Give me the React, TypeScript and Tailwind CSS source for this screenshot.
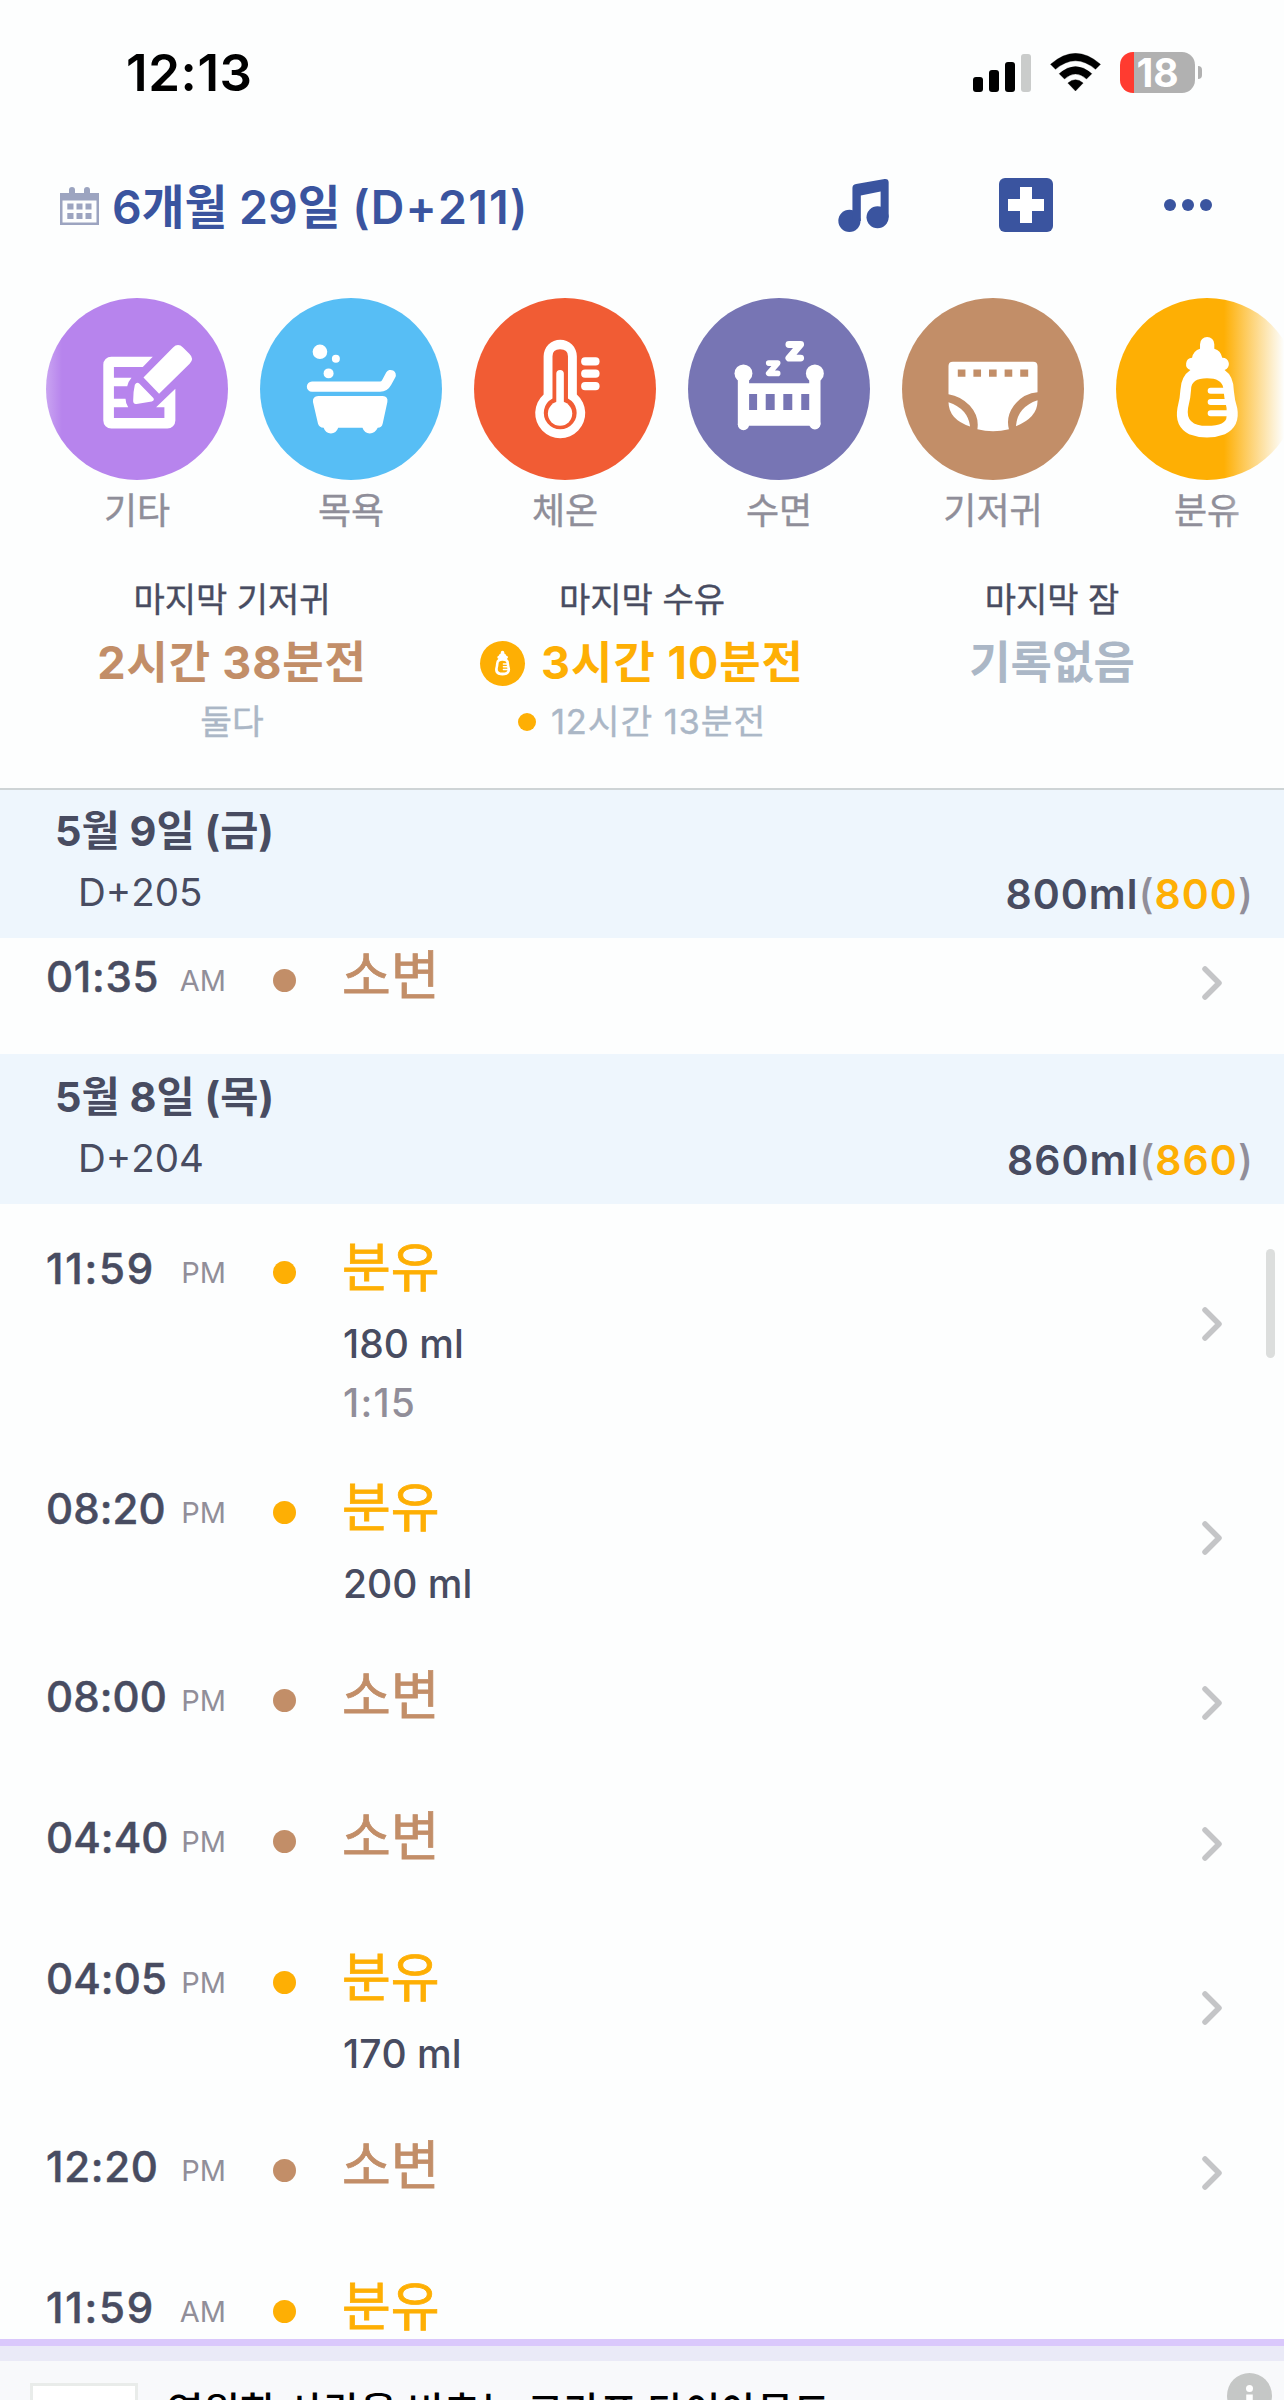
import React from "react";

const BROWN = "#c28e68";
const ORANGE = "#feaf04";

const Bottle = () => (
  <>
    <path fill="#fff" d="M960 193a21 21 0 0 1 43 0V207Q1022 212 1027 234A19 19 0 0 1 1034 271Q1062 290 1062 335Q1064 360 1072 385Q1082 440 1035 464Q981 484 927 464Q882 440 892 385Q900 355 901 330Q903 290 931 271A19 19 0 0 1 936 234Q940 213 960 207Z" />
    <path fill={ORANGE} d="M981 296Q933 296 933 330Q932 355 924 385Q915 439 981 439Q1040 439 1040 410V385Q1032 355 1030 325Q1025 296 981 296Z" />
    <path stroke="#fff" strokeWidth="18" strokeLinecap="round" d="M992 333H1040M992 367H1045M992 401H1048" />
  </>
);

const actions = [
  {
    label: "기타",
    bg: "bg-[#b784ed]",
    box: "50 54 547 548",
    icon: (
      <g fill="#fff">
        <path d="M371 231H246a24 24 0 0 0-24 24V423a24 24 0 0 0 24 24H415a24 24 0 0 0 24-24V327L381 383H406V415H254V383H297Q289 370 289 357H254V320H294Q297 305 307 294H254V262H341Z" />
        <path d="M343 293L432 203Q447 188 462 203L481 222Q497 237 482 252L390 342Z" />
        <path d="M317 315Q323 305 331 312L372 354Q378 361 368 366L322 373Q311 374 312 362Q312 335 317 315Z" />
      </g>
    ),
  },
  {
    label: "목욕",
    bg: "bg-[#57bef5]",
    box: "691 54 547 548",
    icon: (
      <g fill="#fff">
        <circle cx="871" cy="216" r="22" />
        <circle cx="919" cy="237" r="12" />
        <circle cx="897" cy="281" r="15" />
        <path fill="none" stroke="#fff" strokeWidth="31" strokeLinecap="round" d="M847 321H1052Q1065 321 1072 308L1084 286" />
        <path d="M866 349H1060Q1077 350 1074 367L1060 432Q1057 445 1045 445Q1037 462 1021 462Q1005 462 999 445H926Q920 462 904 462Q888 462 882 445Q868 444 865 432L850 367Q848 350 866 349Z" />
      </g>
    ),
  },
  {
    label: "체온",
    bg: "bg-[#f15c34]",
    box: "70 51 552 553",
    icon: (
      <g fill="#fff">
        <path d="M281 228a50.500 50 0 0 1 101 0V344A76 76 0 1 1 281 344Z" />
        <path fill="#f15c34" d="M308 228Q308 207 331 207Q355 207 355 228V356A50 50 0 1 1 308 356Z" />
        <circle cx="331" cy="402" r="37" />
        <path stroke="#fff" strokeWidth="23" strokeLinecap="round" d="M331 281V400" />
        <rect x="395" y="231" width="56" height="25" rx="12" />
        <rect x="395" y="268" width="56" height="25" rx="12" />
        <rect x="395" y="306" width="56" height="25" rx="12" />
      </g>
    ),
  },
  {
    label: "수면",
    bg: "bg-[#7775b4]",
    box: "714 54 548 548",
    icon: (
      <g fill="#fff">
        <circle cx="881" cy="281" r="27" />
        <circle cx="1096" cy="281" r="27" />
        <path d="M864 295H898V311H1079V295H1113V434a17 17 0 0 1-31 5H896a17 17 0 0 1-32-5Z" />
        <circle cx="881" cy="435" r="17" />
        <circle cx="1096" cy="433" r="17" />
        <path fill="#7775b4" d="M898 343h24v48h-24zM948 343h27v48h-27zM1001 343h27v48h-27zM1055 343h24v48h-24z" />
        <path fill="none" stroke="#fff" strokeWidth="21" strokeLinecap="round" strokeLinejoin="round" d="M1018 194H1053L1018 235H1053" />
        <path fill="none" stroke="#fff" strokeWidth="17" strokeLinecap="round" strokeLinejoin="round" d="M957 250H984L957 281H984" />
      </g>
    ),
  },
  {
    label: "기저귀",
    bg: "bg-[#c28e68]",
    box: "67 54 546 548",
    icon: (
      <g fill="#fff">
        <path d="M219 246H461q13 0 13 13V338Q430 342 403 378Q378 412 388 449Q340 461 293 449Q299 410 270 378Q243 350 206 344V259q0-13 13-13Z" />
        <path fill={BROWN} d="M234 269h23v22h-23zM281 269h23v22h-23zM328 269h23v22h-23zM375 269h23v22h-23zM422 269h24v22h-24z" />
        <path d="M206 368Q265 388 271 441Q207 420 206 368Z" />
        <path d="M474 362Q476 413 409 440Q413 383 474 362Z" />
      </g>
    ),
  },
  { label: "분유", bg: "bg-[#feaf04]", box: "708 54 546 548", icon: <Bottle /> },
];

type Entry = { time: string; half: string; kind: "pee" | "milk"; amount?: string; length?: string; tall?: boolean };

const may9: Entry[] = [{ time: "01:35", half: "AM", kind: "pee" }];
const may8: Entry[] = [
  { time: "11:59", half: "PM", kind: "milk", amount: "180 ml", length: "1:15" },
  { time: "08:20", half: "PM", kind: "milk", amount: "200 ml" },
  { time: "08:00", half: "PM", kind: "pee" },
  { time: "04:40", half: "PM", kind: "pee" },
  { time: "04:05", half: "PM", kind: "milk", amount: "170 ml" },
  { time: "12:20", half: "PM", kind: "pee" },
  { time: "11:59", half: "AM", kind: "milk", tall: true },
];

function Row({ e }: { e: Entry }) {
  const h = e.length || e.tall ? "h-[240px]" : e.amount ? "h-[188px]" : "h-[141px]";
  const milk = e.kind === "milk";
  const ones = e.time.startsWith("11") ? "tracking-[1.8px]" : e.time.includes("1") ? "tracking-[0.7px]" : "tracking-[0.1px]";
  return (
    <div className={`flex ${h} pl-[46px]`}>
      <div className="flex w-[180px] justify-between pt-[36px]">
        <span className={`text-[42px] leading-[57px] font-medium text-[#484c61] [-webkit-text-stroke:0.5px] ${ones}`}>{e.time}</span>
        <span className="pt-[4px] text-[29px] leading-[57px] text-[#918e99]">{e.half}</span>
      </div>
      <div className={`mt-[57px] ml-[47px] size-[23px] rounded-full ${milk ? "bg-[#feaf04]" : "bg-[#c28e68]"}`} />
      <div className="ml-[46px] flex-1">
        <div className={`mt-[33px] text-[53px] leading-[62px] [-webkit-text-stroke:0.8px] ${milk ? "text-[#feaf04]" : "text-[#c28e68]"}`}>
          {milk ? "분유" : "소변"}
        </div>
        {e.amount && <div className="mt-[16px] ml-[1px] text-[39px] leading-[58px] font-medium text-[#484c61]">{e.amount}</div>}
        {e.length && <div className="mt-[1px] ml-[1px] text-[39px] leading-[58px] font-medium tracking-[1.2px] text-[#918e99]">{e.length}</div>}
      </div>
      <svg className="mr-[60px] h-[36px] w-[24px] self-center" viewBox="0 0 24 36" fill="none" stroke="#c4c5c7" strokeWidth="5.500" strokeLinecap="round" strokeLinejoin="round">
        <path d="M5 4L19 18L5 32" />
      </svg>
    </div>
  );
}

function DayHeader({ date, day, total }: { date: string; day: string; total: string }) {
  return (
    <div className="relative z-10 flex h-[150px] items-start justify-between bg-[#eef6fd] pr-[30px] pl-[55px]">
      <div>
        <div className="mt-[13px] text-[41.5px] leading-[60px] font-bold whitespace-pre text-[#484c61]">{date}</div>
        <div className="pl-[23px] text-[38.5px] leading-[62px] text-[#484c61]">{day}</div>
      </div>
      <div className="mt-[76px] text-[41px] leading-[60px] font-semibold tracking-[1px] text-[#484c61]">
        {total}ml<span className="font-medium text-[#918e99]">(</span>
        <span className="text-[#feaf04]">{total}</span>
        <span className="font-medium text-[#918e99]">)</span>
      </div>
    </div>
  );
}

export default function App() {
  return (
    <div className="relative flex h-[2400px] w-[1284px] flex-col overflow-hidden bg-[#fdfefe] font-['Inter','Noto_Sans_CJK_KR',sans-serif] [font-kerning:none]">
      <div className="flex h-[144px] shrink-0 items-center pr-[82px] pl-[126px]">
        <span className="flex-1 pt-px text-[51px] leading-[60px] font-semibold tracking-[0.6px] text-black">12:13</span>
        <div className="flex h-[39px] w-[58px] items-end gap-[6px]">
          <i className="h-[15px] w-[10px] rounded-[3px] bg-black" />
          <i className="h-[22px] w-[10px] rounded-[3px] bg-black" />
          <i className="h-[30px] w-[10px] rounded-[3px] bg-black" />
          <i className="h-[38px] w-[10px] rounded-[3px] bg-[#cacccb]" />
        </div>
        <svg className="ml-[19px] h-[38px] w-[51px]" viewBox="868 98 152 114">
          <path d="M944 212L921 188Q944 168 967 188ZM895 160Q944 117 993 160L977 176Q944 146 911 176ZM869 132Q944 66 1019 132L1004 147Q944 96 884 147Z" stroke="#000" strokeWidth="1" strokeLinejoin="round" />
        </svg>
        <div className="ml-[19px] flex h-[41px] w-[75px] items-center justify-center rounded-[13px] bg-[linear-gradient(90deg,#ff3b30_14px,#b1b1b1_14px)] text-[39px] leading-[41px] font-bold text-white">18</div>
        <i className="ml-[3px] h-[13px] w-[4px] rounded-r-full bg-[#b1b1b1]" />
      </div>

      <div className="flex h-[122px] shrink-0 items-center pr-[72px] pl-[60px] text-[#3a549f]">
        <svg className="mt-[2px] h-[39px] w-[39px]" viewBox="0 0 39 39" fill="#9ca4c0">
          <path fillRule="evenodd" d="M0 6H9V3a3 3 0 0 1 6 0V6H24V3a3 3 0 0 1 6 0V6H39V38H0ZM2.500 13.500V35.500H36.500V13.500Z" />
          <path d="M7.300 16.500h6.200v6h-6.200zM16.500 16.500h6v6h-6zM25.500 16.500h6v6h-6zM7.300 26h6.200v6h-6.200zM16.500 26h6v6h-6zM25.500 26h6v6h-6z" />
        </svg>
        <div className="ml-[13px] flex-1 pt-[3px] text-[46.5px] leading-[60px] font-semibold whitespace-pre">6개월 29일 <span className="tracking-[1.2px]">(D+211)</span></div>
        <svg className="h-[54px] w-[51px]" viewBox="233 475 150 161" fill="currentColor">
          <circle cx="266" cy="603" r="33" />
          <circle cx="350" cy="592" r="33" />
          <path d="M275 603V505Q275 495 286 493L371 478Q383 477 383 488V592H359V515L300 527V603Z" />
        </svg>
        <svg className="ml-[110px] h-[54px] w-[54px]" viewBox="0 0 54 54" fill="currentColor">
          <rect width="54" height="54" rx="6" />
          <path fill="#fff" d="M21 9h12v12h12v12H33v12H21V33H9V21h12z" />
        </svg>
        <div className="ml-[111px] flex gap-[6px]">
          <i className="size-[12px] rounded-full bg-[#3a549f]" />
          <i className="size-[12px] rounded-full bg-[#3a549f]" />
          <i className="size-[12px] rounded-full bg-[#3a549f]" />
        </div>
      </div>

      <div className="relative flex h-[302px] shrink-0 gap-[32px] overflow-hidden pt-[32px] pl-[46px]">
        {actions.map((a) => (
          <div key={a.label} className="flex w-[182px] shrink-0 flex-col items-center">
            <div className={`size-[182px] rounded-full ${a.bg}`}>
              <svg className="h-full w-full" viewBox={a.box} fill="none">{a.icon}</svg>
            </div>
            <span className="mt-[6px] text-[36px] leading-[50px] text-[#8f8e99] [-webkit-text-stroke:0.4px]">{a.label}</span>
          </div>
        ))}
        <div className="absolute inset-y-0 left-0 w-[62px] bg-linear-to-r from-[#fdfefe] to-[#fdfefe00]" />
        <div className="absolute inset-y-0 right-0 w-[60px] bg-linear-to-l from-[#fdfefe] to-[#fdfefe00]" />
      </div>

      <div className="grid h-[222px] shrink-0 grid-cols-[410px_410px_410px] border-b-2 border-[#ced4d6] pl-[27px] text-center">
        <div className="pt-[7px]">
          <div className="text-[34px] leading-[50px] text-[#484c61] [-webkit-text-stroke:0.4px]">마지막 기저귀</div>
          <div className="mt-[8px] text-[45px] leading-[60px] font-bold tracking-[0.8px] text-[#c28e68]">2시간 38분전</div>
          <div className="mt-[4px] text-[34.5px] leading-[50px] text-[#abb7c6] [-webkit-text-stroke:0.4px]">둘다</div>
        </div>
        <div className="pt-[7px]">
          <div className="text-[34px] leading-[50px] text-[#484c61] [-webkit-text-stroke:0.4px]">마지막 수유</div>
          <div className="mt-[8px] flex items-center justify-center gap-[16px] text-[45px] leading-[60px] font-bold tracking-[1px] text-[#feaf04]">
            <svg className="size-[45px] rounded-full bg-[#feaf04]" viewBox="708 54 546 548" fill="none"><Bottle /></svg>
            3시간 10분전
          </div>
          <div className="mt-[4px] flex items-center justify-center gap-[15px] text-[34.5px] leading-[50px] tracking-[0.9px] text-[#abb7c6] [-webkit-text-stroke:0.4px]">
            <i className="size-[18px] rounded-full bg-[#feaf04]" />
            12시간 13분전
          </div>
        </div>
        <div className="pt-[7px]">
          <div className="text-[34px] leading-[50px] text-[#484c61] [-webkit-text-stroke:0.4px]">마지막 잠</div>
          <div className="mt-[8px] text-[45px] leading-[60px] font-bold text-[#abb7c6]">기록없음</div>
        </div>
      </div>

      <div className="relative h-[1549px] shrink-0 overflow-hidden">
        <div className="-mt-[2px]">
          <DayHeader date="5월 9일 (금)" day="D+205" total="800" />
        </div>
        <div className="-mt-[26px] mb-px">
          {may9.map((e) => <Row key={e.time} e={e} />)}
        </div>
        <DayHeader date="5월 8일 (목)" day="D+204" total="860" />
        {may8.map((e) => <Row key={e.time + e.half} e={e} />)}
        <i className="absolute top-[459px] right-[9px] h-[109px] w-[9px] rounded-full bg-[#dcdedd]" />
      </div>

      <div className="h-[61px] shrink-0 overflow-hidden border-t-[7px] border-[#dac8fc] bg-[#f8f9fb]">
        <div className="h-[15px] bg-[#eaeaf7]" />
        <div className="flex pr-[12px] pl-[30px]">
          <div className="mt-[22px] h-[108px] w-[108px] border-[3px] border-[#e9ecea] bg-white" />
          <span className="mt-[23px] ml-[29px] flex-1 text-[39.7px] leading-[56px] font-medium text-black">영원한 사랑을 비추는 그라프 다이아몬드</span>
          <svg className="mt-[12px] size-[45px]" viewBox="0 0 45 45">
            <circle cx="22.500" cy="22.500" r="22.500" fill="#c5c7c6" />
            <path stroke="#fff" strokeWidth="6.500" d="M22.500 21.500V36" fill="none" />
            <circle cx="22.500" cy="15.500" r="3.500" fill="#fff" />
          </svg>
        </div>
      </div>
    </div>
  );
}
